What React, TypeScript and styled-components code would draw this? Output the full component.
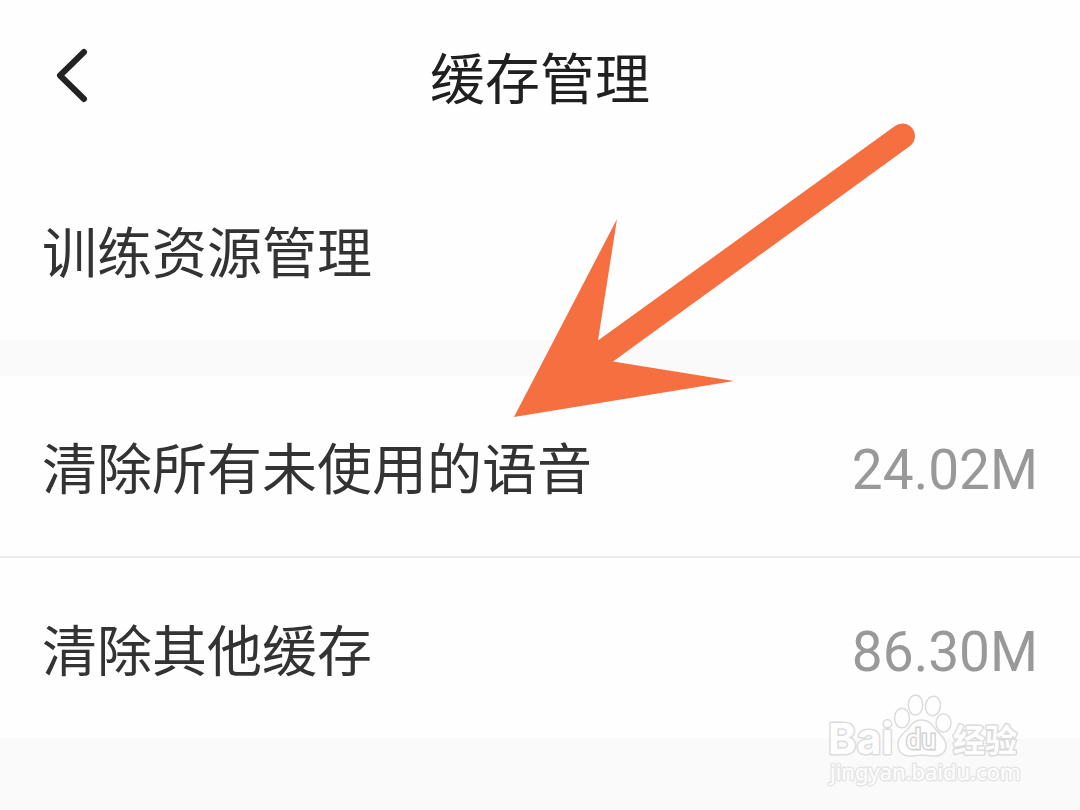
import React from 'react';
import styled, { createGlobalStyle } from 'styled-components';

const GlobalStyle = createGlobalStyle`
  * { box-sizing: border-box; }
  body {
    margin: 0;
    background: #fafafa;
    font-family: Roboto, 'Noto Sans CJK SC', sans-serif;
  }
  button {
    margin: 0;
    border: 0;
    background: none;
    font: inherit;
    cursor: pointer;
  }
`;

const Page = styled.div`
  position: relative;
  min-height: 100vh;
  overflow: hidden;
`;

const Header = styled.header`
  display: grid;
  grid-template-columns: 120px 1fr 120px;
  align-items: center;
  height: 160px;
  background: #fefefe;
`;

const BackButton = styled.button`
  display: flex;
  align-items: center;
  height: 96px;
  padding: 0 0 8px 52px;
  color: #222;
`;

const Title = styled.h1`
  margin: 0;
  color: #202020;
  font-size: 55px;
  font-weight: 400;
  line-height: 80px;
  text-align: center;
`;

const Section = styled.ul`
  margin: 0 0 36px;
  padding: 0;
  list-style: none;
  background: #fefefe;
`;

const Item = styled.li`
  & + & {
    border-top: 2px solid #ececec;
  }
`;

const RowButton = styled.button`
  display: flex;
  align-items: center;
  justify-content: space-between;
  width: 100%;
  height: 180px;
  padding: 8px 42px 0;
  color: #333;
  font-size: 55px;
  line-height: 80px;
  text-align: left;
`;

const Size = styled.span`
  color: #999;
`;

const Arrow = styled.svg`
  position: absolute;
  top: 120px;
  left: 510px;
  pointer-events: none;
`;

const Watermark = styled.div`
  position: absolute;
  top: 692px;
  right: 54px;
  pointer-events: none;
`;

interface RowProps {
  label: string;
  size?: string;
}

function Row({ label, size }: RowProps) {
  return (
    <Item>
      <RowButton type="button">
        <span>{label}</span>
        {size && <Size>{size}</Size>}
      </RowButton>
    </Item>
  );
}

function Logo() {
  return (
    <svg width="200" height="98" viewBox="0 0 200 98" role="img" aria-label="Baidu 经验">
      <g
        fill="#fefefe"
        stroke="#dcdcdc"
        strokeWidth="3"
        strokeLinejoin="round"
        style={{ paintOrder: 'stroke' }}
      >
        <text x="2" y="62" fontFamily="Inter, sans-serif" fontSize="43" fontWeight="700">Bai</text>
        <text x="127" y="60" fontFamily="Noto Sans CJK SC, sans-serif" fontSize="32" fontWeight="700">经验</text>
      </g>
      <g fill="#fefefe" stroke="#dcdcdc" strokeWidth="1.5">
        <ellipse cx="76" cy="26" rx="7.5" ry="9.8" />
        <ellipse cx="89.5" cy="13" rx="7.2" ry="10" />
        <ellipse cx="107" cy="14" rx="7.5" ry="9.8" transform="rotate(8 107 14)" />
        <ellipse cx="117.5" cy="31" rx="7.5" ry="9.3" />
        <path d="M96 28c-9 0-11 6-16 11-5 4-8 8-8 13 0 8 5 12 12 12 5 0 8-1 12-1s8 1 13 1c7 0 12-5 11-12-1-5-4-8-9-13-4-5-7-11-15-11z" />
      </g>
      <text
        x="80" y="57"
        fill="#fefefe" stroke="#d2d2d2" strokeWidth="3" style={{ paintOrder: 'stroke' }}
        fontFamily="Roboto, sans-serif" fontSize="27" fontWeight="400"
      >
        du
      </text>
      <text
        x="4" y="88"
        fill="#fefefe" stroke="#e6e6e6" strokeWidth="3" strokeLinejoin="round" style={{ paintOrder: 'stroke' }}
        fontFamily="Noto Sans, sans-serif" fontSize="22"
      >
        jingyan.baidu.com
      </text>
    </svg>
  );
}

export default function App() {
  return (
    <Page>
      <GlobalStyle />
      <Header>
        <BackButton type="button" aria-label="返回">
          <svg width="40" height="56" viewBox="0 0 40 56" fill="none" stroke="currentColor" strokeWidth="6" strokeLinecap="round" strokeLinejoin="round">
            <path d="M32 4L8 27.500L32 51" />
          </svg>
        </BackButton>
        <Title>缓存管理</Title>
      </Header>
      <main>
        <Section>
          <Row label="训练资源管理" />
        </Section>
        <Section>
          <Row label="清除所有未使用的语音" size="24.02M" />
          <Row label="清除其他缓存" size="86.30M" />
        </Section>
      </main>
      <Arrow width="410" height="300" viewBox="510 120 410 300" aria-hidden="true">
        <path
          fill="#f66f40"
          d="M514 417L617 219L598 340.500L895 126A12.500 12.500 0 0 1 910 146L613 361.500L734 381Z"
        />
      </Arrow>
      <Watermark>
        <Logo />
      </Watermark>
    </Page>
  );
}
